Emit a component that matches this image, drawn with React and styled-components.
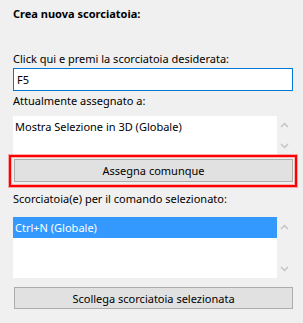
import React from "react";
import styled, { createGlobalStyle } from "styled-components";

const GlobalStyle = createGlobalStyle`
  html, body {
    margin: 0;
    padding: 0;
    background: #f0f0f0;
  }
  body {
    font-family: "Noto Sans", "Liberation Sans", sans-serif;
    font-size: 11px;
    color: #000;
  }
`;

const Panel = styled.div`
  width: 303px;
  height: 323px;
  box-sizing: border-box;
  padding: 6px 0 0 13px;
  display: flex;
  flex-direction: column;
  align-items: flex-start;
  background: #f0f0f0;
`;

const Title = styled.div`
  font-weight: 700;
  line-height: 16px;
`;

const Label = styled.div`
  line-height: 16px;
  margin-top: ${(p) => p.$top}px;
`;

const KeyInput = styled.input`
  box-sizing: border-box;
  width: 280px;
  height: 23px;
  margin: 1px 0 0 0;
  padding: 0 3px;
  border: 1px solid #0078d7;
  outline: none;
  background: #fff;
  font-family: inherit;
  font-size: 11px;
  color: #000;
`;

const ScrollBox = styled.div`
  display: flex;
  margin-top: ${(p) => p.$top}px;
  height: ${(p) => p.$height}px;
`;

const ListArea = styled.div`
  width: 264px;
  height: 100%;
  background: #fff;
  box-sizing: border-box;
  padding-top: ${(p) => p.$pad}px;
  line-height: 16px;
`;

const PlainItem = styled.div`
  padding-left: 2px;
`;

const SelectedItem = styled.div`
  height: 21px;
  line-height: 21px;
  padding-left: 2px;
  background: #3399ff;
  color: #fff;
`;

const ScrollCol = styled.div`
  width: 15px;
  display: flex;
  flex-direction: column;
  justify-content: space-between;
  align-items: center;
  padding: ${(p) => p.$pt}px 0 ${(p) => p.$pb}px 0;
  box-sizing: border-box;
`;

const FocusFrame = styled.div`
  margin-left: -4px;
  display: flex;
  padding: 2px 2px 3px 3px;
  border: 2px solid #ff0000;
  box-shadow: 0 0 0 1px rgba(255, 0, 0, 0.3), inset 0 0 0 1px rgba(255, 0, 0, 0.25);
`;

const Button = styled.button`
  box-sizing: border-box;
  width: 279px;
  height: ${(p) => p.$height || 23}px;
  margin: ${(p) => p.$margin || "0"};
  padding: 0;
  background: #e1e1e1;
  border: 1px solid #adadad;
  font-family: inherit;
  font-size: 11px;
  color: #000;
  text-align: center;
`;

const Chevron = ({ up }) => (
  <svg width="9" height="6" viewBox="0 0 9 6">
    <polyline
      points={up ? "1,5 4.5,1.5 8,5" : "1,1 4.5,4.5 8,1"}
      fill="none"
      stroke="#c4c4c4"
      strokeWidth="1.5"
    />
  </svg>
);

export default function App() {
  return (
    <>
      <GlobalStyle />
      <Panel>
        <Title>Crea nuova scorciatoia:</Title>
        <Label $top={29}>Click qui e premi la scorciatoia desiderata:</Label>
        <KeyInput readOnly value="F5" />
        <Label $top={2}>Attualmente assegnato a:</Label>
        <ScrollBox $top={7} $height={39}>
          <ListArea $pad={3}>
            <PlainItem>Mostra Selezione in 3D (Globale)</PlainItem>
          </ListArea>
          <ScrollCol $pt={6} $pb={6}>
            <Chevron up />
            <Chevron />
          </ScrollCol>
        </ScrollBox>
        <FocusFrame>
          <Button>Assegna comunque</Button>
        </FocusFrame>
        <Label $top={4}>Scorciatoia(e) per il comando selezionato:</Label>
        <ScrollBox $top={10} $height={61}>
          <ListArea $pad={0}>
            <SelectedItem>Ctrl+N (Globale)</SelectedItem>
          </ListArea>
          <ScrollCol $pt={7} $pb={6}>
            <Chevron up />
            <Chevron />
          </ScrollCol>
        </ScrollBox>
        <Button $height={22} $margin="9px 0 0 1px">
          Scollega scorciatoia selezionata
        </Button>
      </Panel>
    </>
  );
}
